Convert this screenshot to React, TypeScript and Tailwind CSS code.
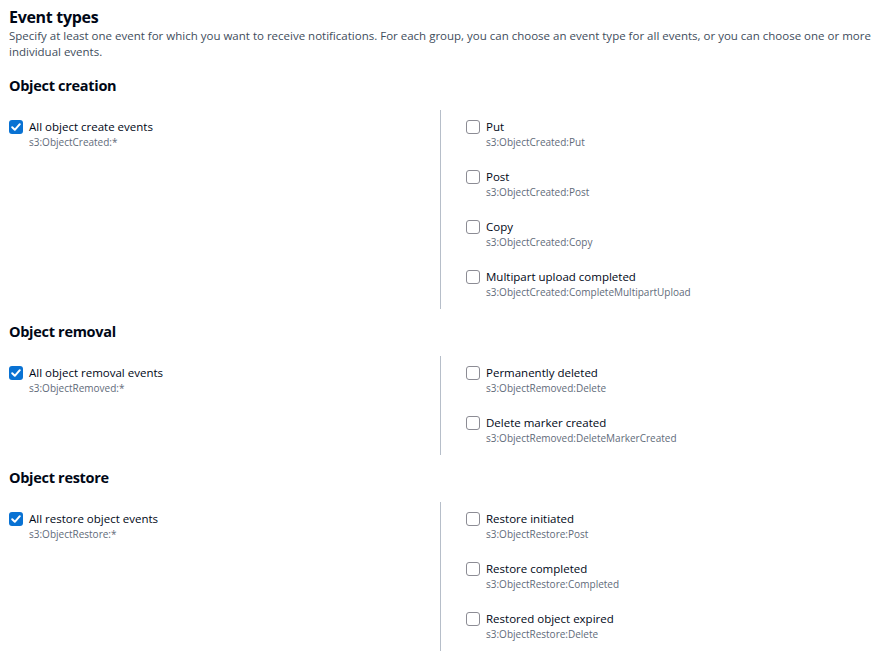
import React from "react";

type EventItem = { label: string; code: string };

type Group = {
  title: string;
  all: EventItem;
  items: EventItem[];
};

const GROUPS: Group[] = [
  {
    title: "Object creation",
    all: { label: "All object create events", code: "s3:ObjectCreated:*" },
    items: [
      { label: "Put", code: "s3:ObjectCreated:Put" },
      { label: "Post", code: "s3:ObjectCreated:Post" },
      { label: "Copy", code: "s3:ObjectCreated:Copy" },
      { label: "Multipart upload completed", code: "s3:ObjectCreated:CompleteMultipartUpload" },
    ],
  },
  {
    title: "Object removal",
    all: { label: "All object removal events", code: "s3:ObjectRemoved:*" },
    items: [
      { label: "Permanently deleted", code: "s3:ObjectRemoved:Delete" },
      { label: "Delete marker created", code: "s3:ObjectRemoved:DeleteMarkerCreated" },
    ],
  },
  {
    title: "Object restore",
    all: { label: "All restore object events", code: "s3:ObjectRestore:*" },
    items: [
      { label: "Restore initiated", code: "s3:ObjectRestore:Post" },
      { label: "Restore completed", code: "s3:ObjectRestore:Completed" },
      { label: "Restored object expired", code: "s3:ObjectRestore:Delete" },
    ],
  },
];

function Box({ checked }: { checked: boolean }) {
  if (checked) {
    return (
      <span className="mt-[1px] grid h-[14px] w-[14px] shrink-0 place-items-center rounded-[3px] bg-[#0972d3]">
        <svg viewBox="0 0 14 14" className="h-[14px] w-[14px]">
          <path d="M3.2 7.3 L5.8 9.8 L10.8 4.2" fill="none" stroke="white" strokeWidth="2" strokeLinecap="round" strokeLinejoin="round" />
        </svg>
      </span>
    );
  }
  return <span className="mt-[1px] h-[14px] w-[14px] shrink-0 rounded-[3px] border border-[#8c8c94] bg-white" />;
}

function Check({ item, checked }: { item: EventItem; checked: boolean }) {
  return (
    <div className="flex gap-[6px]">
      <Box checked={checked} />
      <div>
        <div className="text-[11.5px] leading-[16px] text-[#000716]">{item.label}</div>
        <div className="text-[10px] leading-[14px] text-[#5f6b7a]">{item.code}</div>
      </div>
    </div>
  );
}

export default function App() {
  return (
    <div className="min-h-screen bg-white px-[9px] pt-[6px] font-['Open_Sans',sans-serif] text-[#000716]">
      <h2 className="text-[16px] font-bold leading-[22px] tracking-[-0.3px]">Event types</h2>
      <p className="w-[866px] text-[11.5px] leading-[16px] text-[#414d5c]">
        Specify at least one event for which you want to receive notifications. For each group, you can choose an event type for all events, or you can choose one or more individual events.
      </p>
      <div className="mt-[15px] flex flex-col gap-[12px]">
        {GROUPS.map((g) => (
          <section key={g.title}>
            <h3 className="text-[14.5px] font-bold leading-[22px] tracking-[-0.3px]">{g.title}</h3>
            <div className="mt-[13px] grid grid-cols-[431px_1fr]">
              <div className="pt-[9px]">
                <Check item={g.all} checked />
              </div>
              <div className="flex flex-col gap-[20px] border-l border-[#b6bec9] pb-[10px] pl-[25px] pt-[9px]">
                {g.items.map((it) => (
                  <Check key={it.code} item={it} checked={false} />
                ))}
              </div>
            </div>
          </section>
        ))}
      </div>
    </div>
  );
}
